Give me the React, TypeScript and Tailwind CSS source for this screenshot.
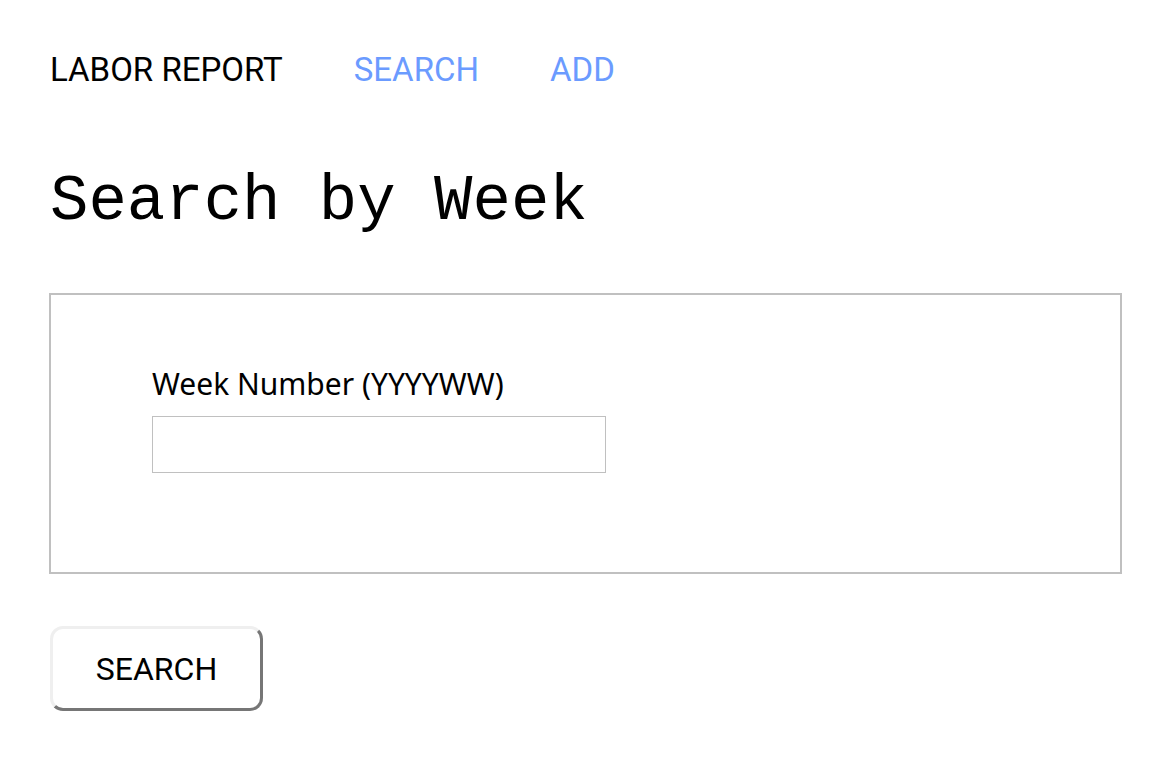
import React from 'react';

const NAV_LINKS = ['SEARCH', 'ADD'];

const App: React.FC = () => {
    return (
        <div className="min-h-screen bg-white px-[50px] pt-[50px] text-black">
            <nav className="flex items-center gap-[71px] font-['Roboto',sans-serif] text-[33px] leading-[40px]">
                <span>LABOR REPORT</span>
                {NAV_LINKS.map((link) => (
                    <a key={link} href="#" className="text-[#6b9bff]">
                        {link}
                    </a>
                ))}
            </nav>

            <h1 className="mt-[72px] font-['Liberation_Mono',monospace] text-[64px] leading-[80px]">
                Search by Week
            </h1>

            <form className="mt-[51px]">
                <div className="-ml-px h-[281px] border-2 border-[#c0c0c0] pl-[101px] pt-[69px]">
                    <label className="block font-['Noto_Sans',sans-serif] text-[30px] leading-[40px]">
                        Week Number (YYYYWW)
                    </label>
                    <input
                        type="text"
                        className="mt-[12px] block h-[57px] w-[454px] border border-[#c0c0c0] bg-white"
                    />
                </div>

                <button
                    type="button"
                    className="mt-[52px] h-[85px] w-[213px] rounded-[13px] border-[3px] border-t-[#efefef] border-l-[#efefef] border-b-[#767676] border-r-[#767676] bg-white font-['Roboto',sans-serif] text-[32px]"
                >
                    SEARCH
                </button>
            </form>
        </div>
    );
};

export default App;
